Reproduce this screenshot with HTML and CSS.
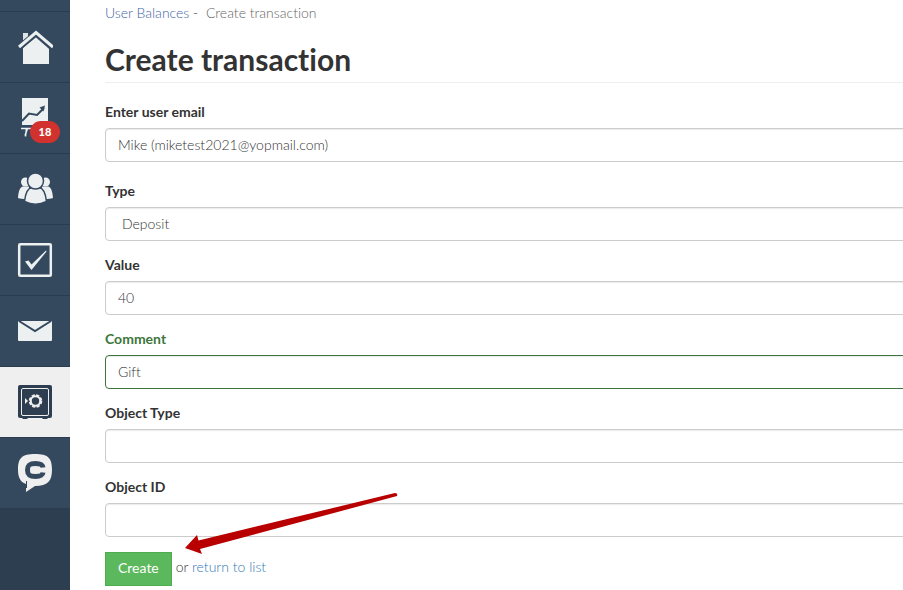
FILE: index.html
```html
<!DOCTYPE html>
<html lang="en">
  <head>
    <meta charset="UTF-8" />
    <meta name="viewport" content="width=device-width, initial-scale=1.0" />
    <title>Create transaction</title>
    <link rel="stylesheet" href="styles.css">
  </head>
  <body>
    <nav class="sidebar">
      <div class="spacer"></div>
      <a href="#" aria-label="Home">
        <svg width="36" height="36" viewBox="0 0 36 36">
          <path d="M6 4h5v6l-5 5z" fill="#dfe4e6" />
          <path d="M6 19 19 7l13 12v16H6z" fill="#ecf0f1" />
          <path d="M2 18.500 19 4.500l16 14" fill="none" stroke="#34495e" stroke-width="6" />
          <path d="M2 18 19 3.500 36 18" fill="none" stroke="#ecf0f1" stroke-width="3" />
        </svg>
      </a>
      <a href="#" aria-label="Reports">
        <svg width="36" height="40" viewBox="0 0 36 40">
          <path d="M5 0h26v27H5z" fill="#ecf0f1" />
          <path d="M5 23 12 15.500l8 1.500 7-7" fill="none" stroke="#34495e" stroke-width="2" />
          <path d="M22.500 9.500 28 7.500l-1.500 6z" fill="#34495e" />
          <path d="M4 30.500h28M8 37.500l2.500-7M9.500 30.500l-1 8" fill="none" stroke="#ecf0f1" stroke-width="1.500" />
        </svg>
        <span class="badge">18</span>
      </a>
      <a href="#" aria-label="Users">
        <svg width="36" height="36" viewBox="0 0 36 36">
          <g fill="#ecf0f1">
            <circle cx="8.500" cy="11" r="4.500" />
            <circle cx="28.500" cy="11" r="4.500" />
            <path d="M1 27c.5-7 2-11 5-11.500h6V28c-4 .5-8 0-11-1zM36 27c-.5-7-2-11-5-11.500h-6V28c4 .5 8 0 11-1z" />
          </g>
          <g fill="#ecf0f1" stroke="#34495e" stroke-width="1.500">
            <path d="M7.500 30.500C8.500 21.500 11 17 15 16.500h7c4 .5 6.500 5 7.500 14-7 3.500-15 3.500-22 0z" />
            <circle cx="18.500" cy="10" r="8" />
          </g>
        </svg>
      </a>
      <a href="#" aria-label="Tasks">
        <svg width="36" height="36" viewBox="0 0 36 36">
          <rect x="2.200" y="2.200" width="31.600" height="31.600" rx="1" fill="none" stroke="#ecf0f1" stroke-width="2.500" />
          <path d="M8 19.500l3.500-1 3 4L29 8.500l.5 1L14.500 28z" fill="#ecf0f1" />
        </svg>
      </a>
      <a href="#" aria-label="Messages">
        <svg width="36" height="36" viewBox="0 0 36 36">
          <rect x="1" y="8" width="34" height="20" rx="1" fill="#ecf0f1" />
          <path d="M2 8 18 18 34 8" fill="none" stroke="#34495e" stroke-width="2" />
        </svg>
      </a>
      <a href="#" class="active" aria-label="Balances">
        <svg width="36" height="36" viewBox="0 0 36 36">
          <path d="M3 1h30q2 0 2 2v29q0 2-2 2h-2l-1 1h-4l-1-1H11l-1 1H6l-1-1H3q-2 0-2-2V3q0-2 2-2z" fill="#2d3e50" />
          <rect x="4.500" y="4.500" width="27" height="27" rx="1.500" fill="none" stroke="#efefef" />
          <circle cx="18.500" cy="17" r="4.700" fill="none" stroke="#efefef" stroke-width="2" />
          <circle cx="18.500" cy="17" r="5.800" fill="none" stroke="#efefef" stroke-width="2" stroke-dasharray="3.200 1.350" />
          <path d="M8 14l3 3-3 3z" fill="#efefef" />
        </svg>
      </a>
      <a href="#" aria-label="Chat">
        <svg width="36" height="40" viewBox="0 0 36 40">
          <path d="M18 1C31 1 35 5 35 16.500 35 28 31 33 18 33l-9 6V31C3 29 1 24 1 16.500 1 5 5 1 18 1z" fill="#efefef" />
          <path d="M9.500 28v7" stroke="#34495e" />
          <path d="M26 14.500C25.500 11 23 10.500 18.500 10.500c-6 0-8 1.500-8 6.500s2 6.500 8 6.500c4.500 0 7-.5 7.500-4" fill="none" stroke="#34495e" stroke-width="5" />
        </svg>
      </a>
    </nav>

    <main>
      <div class="breadcrumb">
        <a href="#">User Balances</a> -&nbsp; <span>Create transaction</span>
      </div>
      <h1>Create transaction</h1>
      <form action="">
        <div class="form-group email">
          <label for="email">Enter user email</label>
          <input type="text" id="email" name="email" value="Mike (miketest2021@yopmail.com)" />
        </div>
        <div class="form-group">
          <label for="type">Type</label>
          <select id="type" name="type">
            <option>Deposit</option>
          </select>
        </div>
        <div class="form-group">
          <label for="value">Value</label>
          <input type="text" id="value" name="value" value="40" />
        </div>
        <div class="form-group success">
          <label for="comment">Comment</label>
          <input type="text" id="comment" name="comment" value="Gift" />
        </div>
        <div class="form-group">
          <label for="object_type">Object Type</label>
          <input type="text" id="object_type" name="object_type" />
        </div>
        <div class="form-group">
          <label for="object_id">Object ID</label>
          <input type="text" id="object_id" name="object_id" />
        </div>
        <div class="actions">
          <button>Create</button>
          <span>or <a href="#">return to list</a></span>
          <svg class="arrow" width="214" height="64" viewBox="0 0 214 64">
            <path d="M0 56 12 43l1.500 5.500L210 1q3 0 2 3L15 57l2 5z" fill="#b80000" />
          </svg>
        </div>
      </form>
    </main>
  </body>
</html>
```

FILE: styles.css
```css
* {
  box-sizing: border-box;
}
body {
  margin: 0;
  min-height: 100vh;
  display: flex;
  font-family: Lato, sans-serif;
  font-size: 14px;
  font-weight: 300;
  font-variant-ligatures: none;
  line-height: 20px;
  color: #333;
  background-color: #fff;
}
a {
  color: #337ab7;
  text-decoration: none;
}
.sidebar {
  flex: 0 0 70px;
  background-color: #2d3e50;
}
.sidebar .spacer {
  height: 12px;
  background-color: #34495e;
  border-bottom: 1px solid #2b3c4e;
}
.sidebar a {
  position: relative;
  display: flex;
  align-items: center;
  justify-content: center;
  height: 71px;
  background-color: #34495e;
  border-bottom: 1px solid #2b3c4e;
}
.sidebar .active {
  background-color: #efefef;
}
.badge {
  position: absolute;
  right: 10px;
  bottom: 10px;
  width: 30px;
  border-radius: 11px;
  background-color: #d2322d;
  color: #fff;
  font-size: 11px;
  font-weight: 900;
  line-height: 22px;
  text-align: center;
}
main {
  flex: 1;
  min-width: 0;
  padding: 3px 0 0 35px;
  overflow: hidden;
}
.breadcrumb a {
  color: #3f66a8;
}
.breadcrumb span {
  color: #666;
}
h1 {
  margin: 20px 0;
  padding-bottom: 6px;
  border-bottom: 1px solid #eee;
  font-size: 30px;
  font-weight: bold;
  line-height: 33px;
}
/* fields run past the right edge of the page */
form {
  margin-right: -20px;
}
.form-group {
  margin-bottom: 15px;
}
.email {
  margin-bottom: 20px;
}
label {
  display: block;
  margin-bottom: 7px;
  font-weight: bold;
  line-height: 18px;
}
input,
select {
  display: block;
  width: 100%;
  height: 34px;
  padding: 5px 12px 7px;
  border: 1px solid #ccc;
  border-radius: 4px;
  background-color: #fff;
  box-shadow: inset 0 1px 1px rgba(0, 0, 0, 0.08);
  color: #333;
  font: inherit;
}
select {
  appearance: none;
  padding: 6px 16px;
}
.success label {
  color: #3c763d;
}
.success input {
  border-color: #3c763d;
}
.actions {
  position: relative;
  display: flex;
  gap: 4px;
}
button {
  height: 34px;
  padding: 0 12px 2px;
  border: 1px solid #4cae4c;
  background-color: #5cb85c;
  color: #fff;
  font: inherit;
  font-weight: 400;
  cursor: pointer;
}
.actions span {
  padding-top: 5px;
}
.arrow {
  position: absolute;
  left: 80px;
  bottom: 30px;
  pointer-events: none;
}
```
